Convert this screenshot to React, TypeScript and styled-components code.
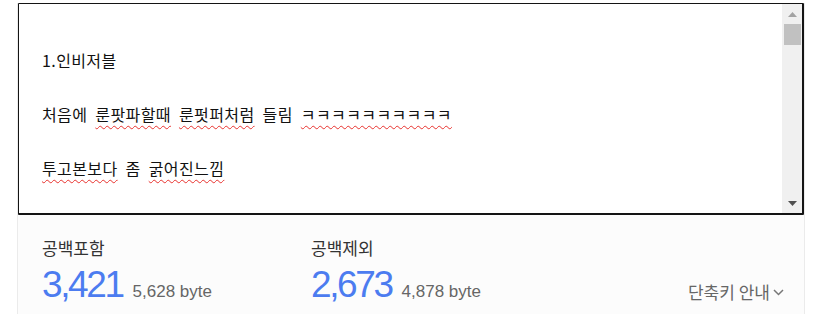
import styled, { createGlobalStyle } from 'styled-components';

const GlobalStyle = createGlobalStyle`
    body {
        margin: 0;
        background: #fff;
        font-family: 'Noto Sans CJK KR', 'Noto Sans', sans-serif;
    }
`;

const Panel = styled.main`
    width: 786px;
    margin: 3px 0 0 17px;
    border-left: 1px solid #ebebeb;
    border-right: 1px solid #ebebeb;
    background: #fcfcfc;
`;

const Editor = styled.div`
    height: 209px;
    display: flex;
    background: #fff;
    border: 1px solid #141414;
    border-right-width: 2px;
    border-bottom-width: 2px;
    border-radius: 1px;
`;

const TextPane = styled.div`
    flex: 1;
    padding: 16px 23px;
    font-size: 16px;
    line-height: 27px;
    color: #111;
    letter-spacing: 0.4px;
    word-spacing: 4px;
    white-space: pre;
    overflow: hidden;
`;

const Line = styled.div`
    height: 27px;
`;

const Typo = styled.span`
    text-decoration: underline wavy #e8322e;
    text-decoration-thickness: 1px;
    text-underline-offset: 4px;
    text-decoration-skip-ink: none;
`;

const ScrollTrack = styled.div`
    width: 20px;
    background: #f0f0f0;
    display: flex;
    flex-direction: column;
    align-items: center;
`;

const ArrowButton = styled.div`
    height: 20px;
    width: 100%;
    display: flex;
    align-items: center;
    justify-content: center;
`;

const Thumb = styled.div`
    width: 17px;
    height: 21px;
    background: #c1c1c1;
`;

const Filler = styled.div`
    flex: 1;
`;

const Stats = styled.section`
    display: flex;
    align-items: flex-start;
    padding: 22px 20px 16px 24px;
`;

const StatBlock = styled.div`
    width: 269px;
`;

const StatLabel = styled.div`
    font-size: 17px;
    line-height: 22px;
    color: #333;
`;

const StatValue = styled.div`
    display: flex;
    align-items: baseline;
    margin-top: 6px;
    font-family: 'Liberation Sans', Arial, sans-serif;
`;

const BigNumber = styled.span`
    font-size: 37px;
    line-height: 40px;
    letter-spacing: -2.4px;
    color: #4c7cf0;
`;

const Bytes = styled.span`
    margin-left: 10px;
    font-size: 17px;
    color: #666;
`;

const Shortcut = styled.div`
    margin-left: auto;
    margin-top: 44px;
    display: flex;
    align-items: center;
    gap: 3px;
    font-size: 17px;
    line-height: 22px;
    color: #666;
`;

const Arrow = ({ up }: { up?: boolean }) => (
    <svg width="9" height="5" viewBox="0 0 9 5">
        {up ? <path d="M0 5 L4.5 0 L9 5 Z" fill="#a3a3a3" /> : <path d="M0 0 L9 0 L4.5 5 Z" fill="#505050" />}
    </svg>
);

const App = () => {
    return (
        <>
            <GlobalStyle />
            <Panel>
                <Editor>
                    <TextPane>
                        <Line />
                        <Line>1.인비저블</Line>
                        <Line />
                        <Line>
                            처음에 <Typo>룬팟파할때</Typo> <Typo>룬펏퍼처럼</Typo> 들림 <Typo>ㅋㅋㅋㅋㅋㅋㅋㅋㅋㅋ</Typo>
                        </Line>
                        <Line />
                        <Line>
                            <Typo>투고본보다</Typo> 좀 <Typo>굵어진느낌</Typo>
                        </Line>
                    </TextPane>
                    <ScrollTrack>
                        <ArrowButton>
                            <Arrow up />
                        </ArrowButton>
                        <Thumb />
                        <Filler />
                        <ArrowButton>
                            <Arrow />
                        </ArrowButton>
                    </ScrollTrack>
                </Editor>
                <Stats>
                    <StatBlock>
                        <StatLabel>공백포함</StatLabel>
                        <StatValue>
                            <BigNumber>3,421</BigNumber>
                            <Bytes>5,628 byte</Bytes>
                        </StatValue>
                    </StatBlock>
                    <StatBlock>
                        <StatLabel>공백제외</StatLabel>
                        <StatValue>
                            <BigNumber>2,673</BigNumber>
                            <Bytes>4,878 byte</Bytes>
                        </StatValue>
                    </StatBlock>
                    <Shortcut>
                        단축키 안내
                        <svg width="11" height="7" viewBox="0 0 11 7">
                            <path d="M1 1 L5.5 5.5 L10 1" stroke="#777" strokeWidth="1.5" fill="none" />
                        </svg>
                    </Shortcut>
                </Stats>
            </Panel>
        </>
    );
};

export default App;
